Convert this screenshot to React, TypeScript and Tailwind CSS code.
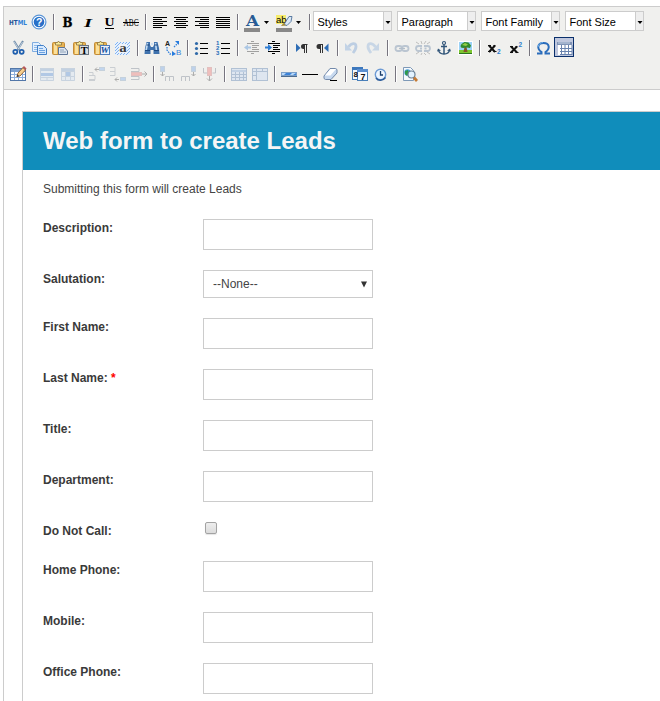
import type { ReactNode } from 'react';

const SANS = "font-['Liberation_Sans',Arial,sans-serif]";

function Icon({ children, off = false }: { children: ReactNode; off?: boolean }) {
  return (
    <svg width="20" height="20" viewBox="0 0 20 20" fill="none" className={off ? 'opacity-35' : ''}>
      {children}
    </svg>
  );
}

function Btn({ label, children, off }: { label: string; children: ReactNode; off?: boolean }) {
  return (
    <button type="button" aria-label={label} className="mr-px block h-5 w-5 shrink-0">
      <Icon off={off}>{children}</Icon>
    </button>
  );
}

function Sep() {
  return (
    <span className="flex h-5 w-2 shrink-0 items-center pl-[3px]">
      <span className="h-4 w-px bg-[#77757f]" />
      <span className="h-4 w-px bg-white" />
    </span>
  );
}

function Align({ xs }: { xs: [number, number][] }) {
  return (
    <>
      {xs.map(([a, b], i) => (
        <rect key={i} x={a} y={5 + i * 2} width={b - a} height="1" fill="#000" />
      ))}
    </>
  );
}

function Clipboard() {
  return (
    <>
      <rect x="2.5" y="4.5" width="12" height="12" rx="1" fill="#e8b352" stroke="#c28c38" />
      <path d="M4 6h3v10H4z" fill="#fbe09a" />
      <path d="M5.500 7V4.500h2l1-1.500 1 1.500h2V7z" fill="#f7ea9a" stroke="#8b7440" strokeWidth=".8" />
    </>
  );
}

function Grid() {
  return (
    <>
      <rect x="2.5" y="4.5" width="15" height="12" fill="#fff" stroke="#5277a8" />
      <path d="M3 5h14v3H3z" fill="#7da2d2" />
      <path d="M3 10.500h14M3 13.500h14M6.500 8v8M10.500 8v8M14.500 8v8" stroke="#8fb0dc" />
    </>
  );
}

function SplitBtn({ label, children }: { label: string; children: ReactNode }) {
  return (
    <button type="button" aria-label={label} className="flex h-5 w-8 shrink-0">
      <Icon>
        {children}
        <rect x="2" y="16" width="16" height="4" fill="#888" />
      </Icon>
      <svg width="10" height="20" viewBox="0 0 10 20">
        <path d="M2 9h5L4.500 12z" fill="#000" />
      </svg>
    </button>
  );
}

function ListBox({ text }: { text: string }) {
  return (
    <div className="-mt-px mr-[5px] flex h-5 w-[79px] shrink-0 border border-[#ccc] bg-white">
      <span className="w-[69px] pl-[3.5px] text-[11px] leading-5 text-black">{text}</span>
      <span className="flex w-2 items-center border-l border-[#ccc] bg-[#eee]">
        <svg width="7" height="18" viewBox="0 0 7 18">
          <path d="M1.500 9h5L4 12z" fill="#000" />
        </svg>
      </span>
    </div>
  );
}

const INDENT_LINES = 'M9 3.500h3M5 5.500h12M10 7.500h7M10 9.500h5M10 11.500h7M5 13.500h12M9 15.500h3';

function Toolbar() {
  return (
    <div className="flex h-[84px] flex-col gap-[6px] overflow-hidden border-y border-[#ccc] bg-[#f0f0ee] pt-[5px] pl-1">
      <div className="flex h-5">
        <Btn label="HTML">
          <text x="1" y="13" fontFamily="DejaVu Sans" fontSize="7" fontWeight="bold" textLength="18" lengthAdjust="spacingAndGlyphs" fill="#1f5296">
            HT<tspan fill="#2f80d8">ML</tspan>
          </text>
        </Btn>
        <Btn label="Help">
          <circle cx="10" cy="10" r="6.900" fill="#fff" stroke="#5b95d6" strokeWidth="1.200" />
          <circle cx="10" cy="10" r="5.300" fill="#2870c8" />
          <text x="7" y="14" fontFamily="Liberation Sans" fontSize="10.500" fontWeight="bold" fill="#fff">?</text>
        </Btn>
        <Sep />
        <Btn label="Bold"><text x="4.500" y="14.500" fontFamily="DejaVu Serif" fontSize="12" fontWeight="bold" textLength="10" lengthAdjust="spacingAndGlyphs" fill="#000" stroke="#000" strokeWidth=".3">B</text></Btn>
        <Btn label="Italic"><text x="5" y="14.500" fontFamily="Liberation Serif" fontSize="13" fontStyle="italic" fontWeight="bold" textLength="8" lengthAdjust="spacingAndGlyphs" fill="#000">I</text></Btn>
        <Btn label="Underline">
          <text x="4.500" y="14" fontFamily="Liberation Serif" fontSize="13" fontWeight="bold" textLength="10" lengthAdjust="spacingAndGlyphs" fill="#000">U</text>
          <rect x="5" y="16" width="9" height="1" fill="#000" />
        </Btn>
        <Btn label="Strikethrough">
          <text x="2.500" y="14" fontFamily="Liberation Serif" fontSize="10" textLength="15" lengthAdjust="spacingAndGlyphs" fill="#000">ABC</text>
          <rect x="2" y="10" width="16" height="1" fill="#000" />
        </Btn>
        <Sep />
        <Btn label="Align left"><Align xs={[[3, 17], [3, 12], [3, 17], [3, 13], [3, 17], [3, 12]]} /></Btn>
        <Btn label="Align center"><Align xs={[[3, 17], [5, 15], [3, 17], [5, 15], [3, 17], [5, 15]]} /></Btn>
        <Btn label="Align right"><Align xs={[[3, 17], [8, 17], [3, 17], [7, 17], [3, 17], [8, 17]]} /></Btn>
        <Btn label="Justify"><Align xs={[[3, 17], [3, 17], [3, 17], [3, 17], [3, 17], [3, 17]]} /></Btn>
        <Sep />
        <SplitBtn label="Text color">
          <text x="4" y="14" fontFamily="DejaVu Serif" fontSize="14.500" fontWeight="bold" textLength="13" lengthAdjust="spacingAndGlyphs" fill="#275b94">A</text>
        </SplitBtn>
        <SplitBtn label="Highlight color">
          <rect x="2" y="3" width="10" height="9" fill="#f5ec6c" />
          <text x="2" y="11" fontFamily="Liberation Sans" fontSize="9.500" fill="#000">ab</text>
          <path d="M15 4.500h3l-1 5-4 4-3-1z" fill="#dce9f6" stroke="#4d719a" strokeWidth=".9" />
          <path d="M7 14l2.500-3L12 13.500z" fill="#a68a35" />
        </SplitBtn>
        <Sep />
        <div className="-ml-px flex">
          <ListBox text="Styles" />
          <ListBox text="Paragraph" />
          <ListBox text="Font Family" />
          <ListBox text="Font Size" />
        </div>
      </div>

      <div className="flex h-5">
        <Btn label="Cut">
          <path d="M6 3l5.500 9M15 3L9.500 12" stroke="#6f8ba8" strokeWidth="2" />
          <path d="M6 3.500l5 8M14.500 4l-4 7" stroke="#dbe6f0" strokeWidth=".7" />
          <circle cx="7.300" cy="13.800" r="2" stroke="#1f5fae" strokeWidth="1.700" />
          <circle cx="13.700" cy="13.800" r="2" stroke="#1f5fae" strokeWidth="1.700" />
        </Btn>
        <Btn label="Copy">
          <path d="M3.500 4.500h6l2 2v7h-8z" fill="#e4f0fd" stroke="#7eace0" />
          <path d="M5 7.500h5M5 9.500h3M5 11.500h3" stroke="#8fb9e8" />
          <path d="M8.500 7.500h6l3 3v6h-9z" fill="#d7e9fd" stroke="#4280c8" />
          <path d="M10 10.500h4M10 12.500h6M10 14.500h6" stroke="#6ca2e0" />
        </Btn>
        <Btn label="Paste">
          <Clipboard />
          <path d="M8.500 9.500h6l3 3.500v3.500h-9z" fill="#dfe7f1" stroke="#5d7597" />
          <path d="M10 12h4M10 14h6" stroke="#8fa2b8" />
        </Btn>
        <Btn label="Paste as text">
          <Clipboard />
          <rect x="8.500" y="7.500" width="9" height="9" fill="#d9dee3" stroke="#6b7580" />
          <text x="9.700" y="15.500" fontFamily="Liberation Serif" fontSize="10.500" fontWeight="bold" fill="#000">T</text>
        </Btn>
        <Btn label="Paste from Word">
          <Clipboard />
          <rect x="8.500" y="7.500" width="9" height="9" fill="#eaf1fb" stroke="#4f7dba" />
          <text x="8.500" y="15" fontFamily="Liberation Serif" fontSize="9" fontWeight="bold" fontStyle="italic" textLength="8.500" lengthAdjust="spacingAndGlyphs" fill="#124d9d">W</text>
        </Btn>
        <Btn label="Select all">
          <rect x="2" y="4" width="15" height="13" fill="#e6f0fd" />
          <path d="M2 7l3-3M2 10l6-6M2 13l9-9M2 16l12-12M4 17L17 4M7 17L17 7M10 17l7-7M13 17l4-4" stroke="#80b2f0" strokeWidth="1" />
          <rect x="6" y="6" width="8" height="9" fill="#eef3fa" />
          <text x="6.300" y="14" fontFamily="Liberation Serif" fontSize="13" fontWeight="bold" textLength="7.500" lengthAdjust="spacingAndGlyphs" fill="#3b3b40">a</text>
        </Btn>
        <Sep />
        <Btn label="Find">
          <path d="M4.500 4H8v3l1 2h2l1-2V4h3.500l1.500 6 .5 6h-6v-4H8.500v4h-6l.5-6z" fill="#3f72ad" />
          <path d="M5.500 5L4 13M13.500 5l1 8M9 6h2" stroke="#c3dcf3" strokeWidth="1.600" />
          <path d="M3 12.500h5M12 12.500h5M4.500 7h3M12.500 7h3" stroke="#1c4881" />
        </Btn>
        <Btn label="Replace">
          <text x="2" y="8" fontFamily="Liberation Sans" fontSize="7" fontWeight="bold" fill="#222">A</text>
          <text x="13" y="17" fontFamily="Liberation Sans" fontSize="8" fill="#3682d8">B</text>
          <path d="M4 9v3l3 4h3M11 9l4-4" stroke="#3380db" strokeWidth="1.300" strokeDasharray="1.500 1" />
          <path d="M12 3h4v4zM9 13l4 3-4 2z" fill="#267bdd" />
        </Btn>
        <Sep />
        <Btn label="Bullets">
          {[5, 10, 15].map((y) => <g key={y}><circle cx="4.500" cy={y + 0.500} r="1.600" fill="#2e69a8" /><rect x="8" y={y} width="8" height="1" fill="#000" /></g>)}
        </Btn>
        <Btn label="Numbering">
          {[5, 10, 15].map((y, i) => <g key={y}><text x="3" y={y + 2} fontFamily="Liberation Sans" fontSize="6" fontWeight="bold" fill="#236cb8">{i + 1}</text><rect x="8" y={y} width="9" height="1" fill="#000" /></g>)}
        </Btn>
        <Sep />
        <Btn label="Outdent" off>
          <path d={INDENT_LINES} stroke="#111" />
          <path d="M2 9.500l4-3v2h3v2H6v2z" fill="#2e7dd3" />
        </Btn>
        <Btn label="Indent">
          <path d={INDENT_LINES} stroke="#000" />
          <path d="M9 9.500L5 6v2.500H2v2h3V13z" fill="#2e7dd3" />
        </Btn>
        <Sep />
        <Btn label="Left to right">
          <path d="M4 5.500l4.500 4.500L4 14z" fill="#2e6db5" />
          <path d="M15.500 6h-4a2.400 2.400 0 000 5H12v4h1V7h1v8h1V7h.5z" fill="#333" />
        </Btn>
        <Btn label="Right to left">
          <path d="M15.500 5.500L11 10l4.500 4z" fill="#2e6db5" />
          <path d="M10 6H6a2.400 2.400 0 000 5h1v4h1V7h1v8h1z" fill="#333" />
        </Btn>
        <Sep />
        <Btn label="Undo" off>
          <path d="M6.500 9C9 5 14 4 14 8.500c0 2.500-1 4-3 6.500" stroke="#5f92cf" strokeWidth="2.800" />
          <path d="M3 5v7.500h7z" fill="#6f9fd8" />
        </Btn>
        <Btn label="Redo" off>
          <path d="M12.500 9C10 5 5 4 5 8.500c0 2.500 1 4 3 6.500" stroke="#7fa8d8" strokeWidth="2.800" />
          <path d="M16 5v7.500H9z" fill="#7fa8d8" />
        </Btn>
        <Sep />
        <Btn label="Link" off>
          <rect x="3.500" y="8" width="6.500" height="5" rx="2.500" stroke="#58779d" strokeWidth="1.800" />
          <rect x="10" y="8" width="6.500" height="5" rx="2.500" stroke="#58779d" strokeWidth="1.800" />
          <path d="M7 10.500h6" stroke="#456387" strokeWidth="1.300" />
        </Btn>
        <Btn label="Unlink" off>
          <path d="M9 8H5.500a2.500 2.500 0 000 5H9M11 8h3.500a2.500 2.500 0 010 5H11M7 10.500h2M11.500 10.500h2" stroke="#58779d" strokeWidth="1.800" />
          <path d="M9 6L8 3M11 6l2-3M6 6L3 4M14 6l3-2M9 15l-1 2M11 15l2 2M6 14l-3 2M14 14l3 2" stroke="#555" strokeWidth=".9" />
        </Btn>
        <Btn label="Anchor">
          <circle cx="10" cy="5" r="1.500" stroke="#315579" strokeWidth="1.200" />
          <path d="M10 6.500V16M7 8.500h6M4.500 12c.5 3 3 4 5.500 4s5-1 5.500-4" stroke="#315579" strokeWidth="1.500" />
          <path d="M3 13.500l1-3 3 2zM17 13.500l-1-3-3 2z" fill="#315579" />
        </Btn>
        <Btn label="Image">
          <rect x="3" y="3" width="15" height="14" fill="#fff" />
          <path d="M4 4h13v8H4z" fill="#9bd2f6" />
          <path d="M4 12h13v4H4z" fill="#7cc62f" />
          <path d="M9.500 9h2l1 5H8.500z" fill="#855428" />
          <path d="M5.500 8l1-2 3-2 4 .5 2.500 3-1 2.500-3-.5-4 .5-2-.5z" fill="#318a2c" />
          <path d="M7 7l3-2 3 1.500-2 1.500z" fill="#93cc45" />
          <rect x="4" y="15" width="13" height="1" fill="#2c741e" />
        </Btn>
        <Sep />
        <Btn label="Subscript">
          <path d="M5 7.500l6 6.500M11 7.500L5 14" stroke="#111" strokeWidth="2" /><path d="M4 7.500h3M4 13.500h3M9.500 13.500h3M9.500 7.500h2" stroke="#111" />
          <text x="13" y="16" fontFamily="Liberation Sans" fontSize="6.500" fontWeight="bold" fill="#2e7dcc">2</text>
        </Btn>
        <Btn label="Superscript">
          <path d="M6 8.500l6 6M12 8.500L6 14.500" stroke="#111" strokeWidth="2" /><path d="M5 8.500h3M5 14.500h3M10.500 14.500h3M10.500 8.500h2" stroke="#111" />
          <text x="13.500" y="9" fontFamily="Liberation Sans" fontSize="6.500" fontWeight="bold" fill="#2e7dcc">2</text>
        </Btn>
        <Sep />
        <Btn label="Special character">
          <path d="M3 15.500h4.500V14C2.500 10.500 3.500 5 9.500 5s7 5.500 2 9v1.500H16" stroke="#2b6dbb" strokeWidth="2" />
          <path d="M4 9c.5-3 2.500-4.500 5-4.500" stroke="#6bade8" />
        </Btn>
        <button type="button" aria-label="Toggle guidelines" className="-mt-px -ml-px block h-5 w-5 shrink-0">
          <Icon>
            <rect x=".5" y=".5" width="19" height="19" fill="#bfc7dd" stroke="#0a2f6b" />
            <rect x="4" y="8" width="14" height="10" fill="#fff" />
            <path d="M3 5h15v3H3z" fill="#7f93b5" />
            <path d="M4 6h12" stroke="#c9d5e7" />
            <path d="M7.500 8v10M11 8v10M14.500 8v10M18 8v10M6 11.500h12M6 14.500h12M6 17.500h12" stroke="#6983ae" />
          </Icon>
        </button>
      </div>

      <div className="flex h-5">
        <Btn label="Insert table">
          <Grid />
          <path d="M9 12.500l1-3.500 5-5.500 2.500 2.500-5.500 6z" fill="#f6cf8e" stroke="#8a5930" strokeWidth=".9" />
          <path d="M14.500 3.500l1.500-1.500L18.500 4.500 17.500 6z" fill="#b5565a" />
          <path d="M8.500 13l1-2.500 1.500 1.500z" fill="#333" />
        </Btn>
        <Sep />
        <Btn label="Row properties" off>
          <path d="M3 4h14v13H3z" fill="#cfe0f5" /><path d="M3 4h14v3H3z" fill="#6f9acc" />
          <path d="M4 9h12v3H4z" fill="#3f80d5" /><path d="M3.500 4.500h13v12h-13zM3 13.500h14M10 13v4" stroke="#7f9ec4" />
        </Btn>
        <Btn label="Cell properties" off>
          <path d="M3 4h14v13H3z" fill="#cfe0f5" /><path d="M3 4h14v3H3z" fill="#6f9acc" />
          <path d="M8 8h4v4H8z" fill="#3f80d5" /><path d="M3.500 4.500h13v12h-13zM3 7.500h14M3 12.500h14M7.500 7v9M12.500 7v9" stroke="#7f9ec4" />
        </Btn>
        <Sep />
        <Btn label="Insert row before" off>
          <path d="M2 8.500h4v3H2M2 11.500h6v4H2M2 16.500h6" stroke="#8591a0" />
          <path d="M8 5.500h4M8 5.500l2-2M8 5.500l2 2" stroke="#333" /><rect x="12.500" y="3.500" width="5" height="3" fill="#6ca6ee" stroke="#7799bd" />
        </Btn>
        <Btn label="Insert row after" off>
          <path d="M2 3.500h5v4H2M2 7.500h5v4H2" stroke="#8591a0" />
          <path d="M7 15.500h4M7 15.500l2-2M7 15.500l2 2" stroke="#333" /><rect x="12.500" y="13.500" width="5" height="3" fill="#6ca6ee" stroke="#7799bd" />
        </Btn>
        <Btn label="Delete row" off>
          <path d="M2 4.500h8v3H2M2 12.500h8v3H2" stroke="#657284" />
          <rect x="2.500" y="8.500" width="10" height="3" fill="#ee6262" stroke="#c96a6a" /><path d="M13 10h5M15.500 7.500L18 10l-2.500 2.500" stroke="#333" />
        </Btn>
        <Sep />
        <Btn label="Insert column before" off>
          <rect x="2.500" y="2.500" width="4" height="5" fill="#5f9ae6" stroke="#7799bd" />
          <path d="M4.500 8v4M2.500 10l2 2 2-2" stroke="#333" /><path d="M7.500 17v-4.500h4V17M11.500 12.500h4V17" stroke="#657284" />
        </Btn>
        <Btn label="Insert column after" off>
          <rect x="12.500" y="2.500" width="4" height="5" fill="#5f9ae6" stroke="#7799bd" />
          <path d="M14.500 8v4M12.500 10l2 2 2-2" stroke="#333" /><path d="M2.500 17v-4.500h4V17M6.500 12.500h4V17" stroke="#657284" />
        </Btn>
        <Btn label="Delete column" off>
          <path d="M3.500 4v5h4M15.500 4v5h-3" stroke="#657284" />
          <rect x="7.500" y="3.500" width="4" height="8" fill="#ee6262" stroke="#c96a6a" /><path d="M9.500 12v5M7 14.500L9.500 17l2.500-2.500" stroke="#333" />
        </Btn>
        <Sep />
        <Btn label="Split cells" off>
          <rect x="2.500" y="4.500" width="15" height="12" fill="#bdd6f5" stroke="#3f6ca6" />
          <path d="M3 6h14v2H3z" fill="#6d9ad2" />
          <path d="M3 10.500h14M3 13.500h14M6.500 8v8M10.500 8v8M14.500 8v8" stroke="#3f6ca6" />
        </Btn>
        <Btn label="Merge cells" off>
          <rect x="2.500" y="4.500" width="15" height="12" fill="#bdd6f5" stroke="#3f6ca6" />
          <path d="M3 7.500h14M6.500 5v12M12.500 5v2M3 11.500h3" stroke="#3f6ca6" />
        </Btn>
        <Sep />
        <Btn label="Horizontal rule">
          <rect x="2.500" y="8.500" width="15" height="3" fill="#3b82d8" stroke="#7c9fc8" />
          <path d="M3 9h4l-2 2H3zM13 9h4l-3 2h-3z" fill="#b8d9fa" /><path d="M2 12.500h16" stroke="#4c6b8e" />
        </Btn>
        <Btn label="Insert line"><path d="M2 10.500h16" stroke="#000" /></Btn>
        <Btn label="Remove formatting">
          <path d="M3 12l6-7.500h5.500l1.500 1V9l-6 6.500H4.500L3 14.500z" fill="#c7d9ef" stroke="#7289aa" />
          <path d="M4 11.500L9.500 5H15L9.500 11.500z" fill="#fff" />
          <path d="M9 16.500h7" stroke="#000" />
        </Btn>
        <Sep />
        <Btn label="Insert date">
          <rect x="2.500" y="3.500" width="10" height="12" fill="#f4f8ff" stroke="#497fb9" /><path d="M2 3h11v3H2z" fill="#3d78bd" />
          <rect x="7.500" y="5.500" width="10" height="11" fill="#f7faff" stroke="#497fb9" /><path d="M7 5h11v3H7z" fill="#5b8fd0" />
          <text x="3.500" y="13" fontFamily="Liberation Sans" fontSize="8" fontWeight="bold" fill="#111">8</text>
          <text x="10.500" y="15.500" fontFamily="Liberation Sans" fontSize="9" fontWeight="bold" fill="#111">7</text>
        </Btn>
        <Btn label="Insert time">
          <circle cx="9.500" cy="10.500" r="5.200" fill="#eef6ff" stroke="#6e9bd4" strokeWidth="1.400" />
          <path d="M5 14c2 3 7 3 9.500-.5" stroke="#2d5c99" strokeWidth="1.500" /><path d="M9.500 7v4H12" stroke="#1c3f6b" strokeWidth="1.300" />
        </Btn>
        <Sep />
        <Btn label="Preview">
          <path d="M3.500 3.500h7l3 3v10h-10z" fill="#f5f9fd" stroke="#7e99b7" />
          <circle cx="7.500" cy="8.500" r="3.200" fill="#4aa0d8" /><path d="M5 7l3-1 1 3-2 3-2-2z" fill="#2d9a4a" />
          <circle cx="11.500" cy="10.500" r="3.500" fill="#e3f3ff" stroke="#6b8298" strokeWidth="1.200" />
          <path d="M14 13.500l3 3.500" stroke="#c47a35" strokeWidth="2.700" />
        </Btn>
      </div>
    </div>
  );
}

type FieldKind = 'text' | 'select' | 'check';

const FIELDS: { label: string; kind: FieldKind; required?: boolean }[] = [
  { label: 'Description:', kind: 'text' },
  { label: 'Salutation:', kind: 'select' },
  { label: 'First Name:', kind: 'text' },
  { label: 'Last Name:', kind: 'text', required: true },
  { label: 'Title:', kind: 'text' },
  { label: 'Department:', kind: 'text' },
  { label: 'Do Not Call:', kind: 'check' },
  { label: 'Home Phone:', kind: 'text' },
  { label: 'Mobile:', kind: 'text' },
  { label: 'Office Phone:', kind: 'text' },
];

const ROW_HEIGHT: Record<FieldKind, string> = { text: 'h-[51px]', select: 'h-12', check: 'h-[39px]' };

function Control({ kind }: { kind: FieldKind }) {
  if (kind === 'select')
    return (
      <div className="flex h-7 w-[170px] items-center justify-between border border-[#ccc] bg-white pr-[5px] pl-[9px] text-xs text-[#444]">
        <span>--None--</span>
        <svg width="6" height="7" viewBox="0 0 6 7"><path d="M0 .5h6L3 6.500z" fill="#333" /></svg>
      </div>
    );
  if (kind === 'check')
    return <div className="ml-[2px] h-3 w-3 rounded-[2px] border border-[#a3a3a3] bg-linear-to-b from-[#eee] to-[#dcdcdc] shadow-[0_1px_1px_#e5e5e5]" />;
  return <div className="h-[31px] w-[170px] border border-[#ccc] bg-white" />;
}

export default function App() {
  return (
    <div className={`h-[701px] w-[660px] overflow-hidden bg-white pt-[6px] pl-[3px] ${SANS}`}>
      <div className="h-[695px] border-l border-[#ccc]">
        <Toolbar />
        <div className="mt-[21px] ml-[18px] h-[590px] overflow-hidden border-t border-l border-[#ccc]">
          <h1 className="h-[58px] bg-[#108dbb] pl-5 text-2xl leading-[58px] font-bold text-[#f5f5f5]">Web form to create Leads</h1>
          <p className="h-[39px] pt-[10px] pl-5 text-xs leading-[18px] text-[#444]">Submitting this form will create Leads</p>
          {FIELDS.map((f) => (
            <div key={f.label} className={`flex pt-[10px] pl-5 ${ROW_HEIGHT[f.kind]}`}>
              <div className="w-40 text-xs leading-[18px] font-bold text-[#3a3a3a]">
                {f.label}
                {f.required && <span className="text-[#f00]"> *</span>}
              </div>
              <Control kind={f.kind} />
            </div>
          ))}
        </div>
      </div>
    </div>
  );
}
